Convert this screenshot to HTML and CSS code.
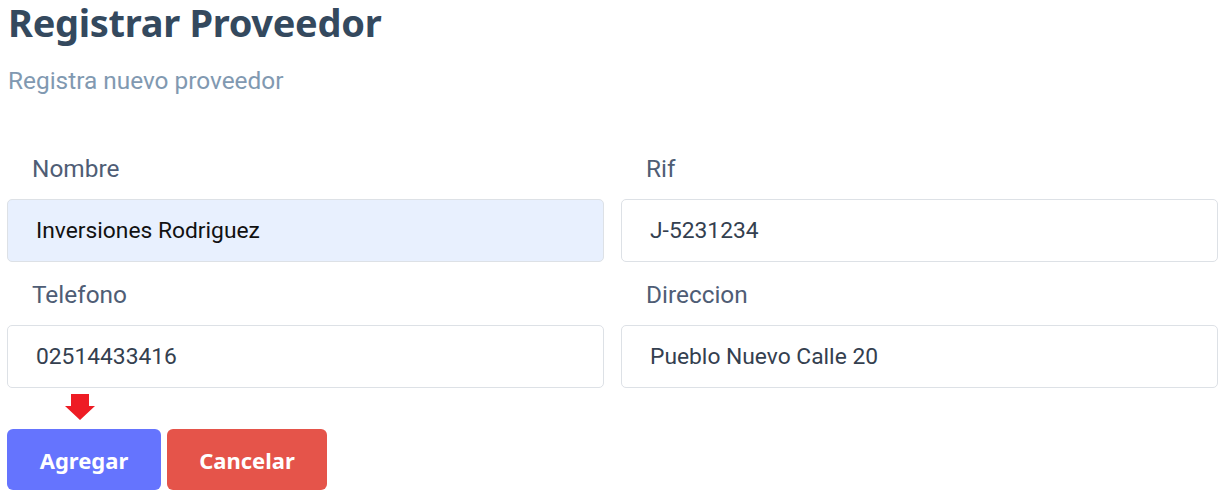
FILE: index.html
```html
<!DOCTYPE html>
<html lang="es">
<head>
<meta charset="utf-8">
<title>Registrar Proveedor</title>
<link rel="stylesheet" href="styles.css">
</head>
<body>
<div class="page">
  <h1 class="title">Registrar Proveedor</h1>
  <p class="subtitle">Registra nuevo proveedor</p>
  <form class="form">
    <div class="grid">
      <div class="field">
        <label class="label">Nombre</label>
        <div class="input filled">Inversiones Rodriguez</div>
      </div>
      <div class="field">
        <label class="label">Rif</label>
        <div class="input">J-5231234</div>
      </div>
      <div class="field">
        <label class="label">Telefono</label>
        <div class="input">02514433416</div>
      </div>
      <div class="field">
        <label class="label">Direccion</label>
        <div class="input">Pueblo Nuevo Calle 20</div>
      </div>
    </div>
    <div class="arrow-row">
      <svg class="arrow" width="30" height="26" viewBox="0 0 30 26"><path d="M6 0 H24 V12 H30 L15 26 L0 12 H6 Z" fill="#ee1c24"/></svg>
    </div>
    <div class="actions">
      <button type="button" class="btn btn-primary">Agregar</button>
      <button type="button" class="btn btn-danger">Cancelar</button>
    </div>
  </form>
</div>
</body>
</html>
```
FILE: styles.css
```css
* { box-sizing: border-box; }
body {
  margin: 0;
  background: #fff;
  font-family: Roboto, "Liberation Sans", sans-serif;
}
.page {
  padding: 0 8px 0 7px;
}
.title {
  margin: 0;
  padding: 1px 0 0 1px;
  font-family: "Noto Sans", "Open Sans", sans-serif;
  font-weight: 700;
  font-size: 38px;
  line-height: 42px;
  color: #34495e;
  letter-spacing: -0.3px;
}
.subtitle {
  margin: 24px 0 0 1px;
  font-size: 24.4px;
  line-height: 28px;
  color: #8199b1;
}
.form {
  margin-top: 60px;
}
.grid {
  display: grid;
  grid-template-columns: 1fr 1fr;
  column-gap: 17px;
  row-gap: 19px;
}
.field {
  display: flex;
  flex-direction: column;
}
.label {
  padding-left: 25px;
  font-size: 24.4px;
  line-height: 28px;
  color: #4f5d75;
  margin-bottom: 16px;
}
.input {
  height: 63px;
  border: 1px solid #dde1e6;
  border-radius: 5px;
  padding: 0 28px;
  display: flex;
  align-items: center;
  font-size: 22.8px;
  color: #34404f;
}
.input.filled {
  background: #e8f0fe;
  color: #111;
}
.arrow-row {
  height: 41px;
  padding: 6px 0 0 58px;
}
.arrow { display: block; }
.actions {
  display: flex;
  gap: 6px;
}
.btn {
  height: 61px;
  border: none;
  border-radius: 6px;
  color: #fff;
  font-family: "Noto Sans", "Open Sans", sans-serif;
  font-weight: 700;
  font-size: 22px;
  padding: 0;
}
.btn-primary { background: #6574fe; width: 154px; }
.btn-danger { background: #e5544a; width: 160px; }
```
